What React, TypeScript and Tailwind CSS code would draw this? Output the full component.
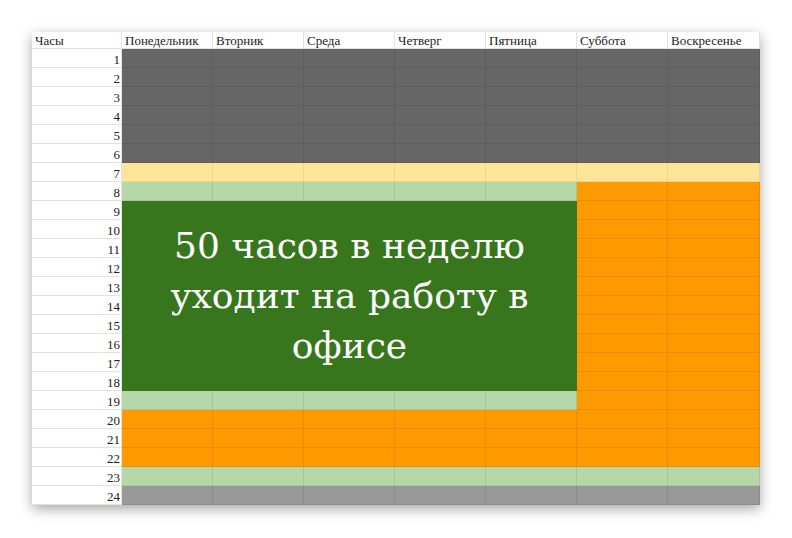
import { Fragment } from 'react'

const days = ['Понедельник', 'Вторник', 'Среда', 'Четверг', 'Пятница', 'Суббота', 'Воскресенье']

// цвет ячейки по часу и дню (0..6)
const cellClass = (h: number, d: number) => {
  if (h <= 6) return 'bg-[#666666] border-[#5c5c5c]'
  if (h === 7) return 'bg-[#ffe599] border-[#f0d48a]'
  if (h === 24) return 'bg-[#999999] border-[#8c8c8c]'
  if (h === 23) return 'bg-[#b6d7a8] border-[#a5c797]'
  if (h >= 20 || d >= 5) return 'bg-[#ff9900] border-[#e88c0a]'
  return 'bg-[#b6d7a8] border-[#a5c797]'
}

export default function App() {
  const hours = Array.from({ length: 24 }, (_, i) => i + 1)
  return (
    <div className="w-[792px] h-[538px] bg-white pt-[32px] pl-[32px]" style={{ fontFamily: '"Liberation Serif", "DejaVu Serif", serif' }}>
      <div className="w-[728px] grid grid-cols-[90px_repeat(6,91px)_1fr] grid-rows-[17px_repeat(24,19px)] shadow-[0_4px_12px_rgba(0,0,0,0.35)] text-[13px] text-[#222]">
        <div className="border-r border-b border-[#e2e2e2] px-[3px] leading-[17px]">Часы</div>
        {days.map(d => (
          <div key={d} className="border-r border-b border-[#e2e2e2] px-[3px] leading-[17px] whitespace-nowrap overflow-hidden">{d}</div>
        ))}
        <div className="col-start-2 col-span-5 row-start-10 row-span-10 bg-[#38761d] flex items-center justify-center text-white text-[36px] leading-[50px] text-center px-10" style={{ fontFamily: '"DejaVu Serif", serif' }}>
          50 часов в неделю уходит на работу в офисе
        </div>
        {hours.map(h => (
          <Fragment key={h}>
            <div className="border-r border-b border-[#e2e2e2] text-right pr-[1px] leading-[22px] text-[13px]">{h}</div>
            {days.map((_, d) =>
              h >= 9 && h <= 18 && d < 5 ? null : (
                <div key={d} className={`border-r border-b ${cellClass(h, d)}`} />
              )
            )}
          </Fragment>
        ))}
      </div>
    </div>
  )
}
